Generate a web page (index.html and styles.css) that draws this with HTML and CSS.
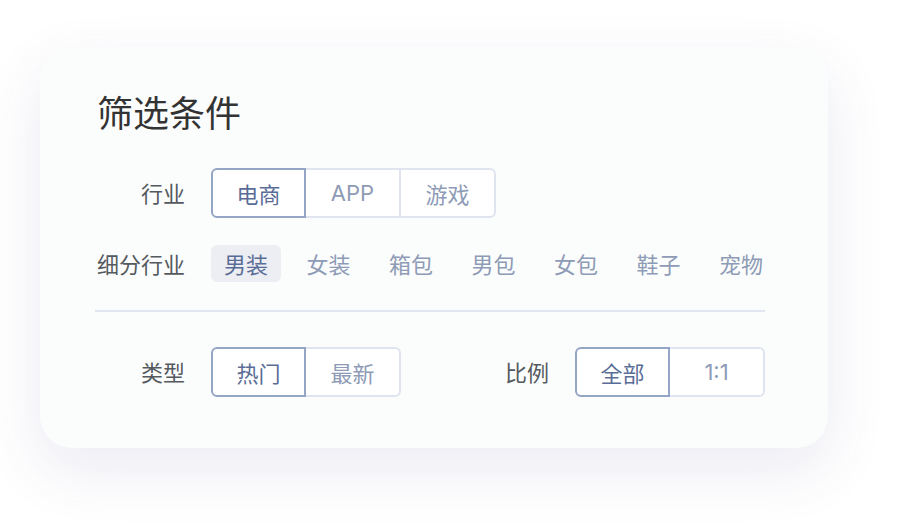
FILE: index.html
```html
<!DOCTYPE html>
<html lang="zh-CN">
  <head>
    <meta charset="UTF-8" />
    <meta name="viewport" content="width=device-width, initial-scale=1.0" />
    <title>筛选条件</title>
    <link rel="stylesheet" href="styles.css">
  </head>
  <body>
    <div class="card">
      <h1 class="title">筛选条件</h1>

      <div class="row">
        <span class="label">行业</span>
        <div class="seg">
          <span class="seg-item active">电商</span>
          <span class="seg-item">APP</span>
          <span class="seg-item">游戏</span>
        </div>
      </div>

      <div class="row sub">
        <span class="label">细分行业</span>
        <div class="chips">
          <span class="chip active">男装</span>
          <span class="chip">女装</span>
          <span class="chip">箱包</span>
          <span class="chip">男包</span>
          <span class="chip">女包</span>
          <span class="chip">鞋子</span>
          <span class="chip">宠物</span>
        </div>
      </div>

      <div class="divider"></div>

      <div class="row split">
        <div class="group">
          <span class="label">类型</span>
          <div class="seg">
            <span class="seg-item active">热门</span>
            <span class="seg-item">最新</span>
          </div>
        </div>
        <div class="group">
          <span class="label">比例</span>
          <div class="seg">
            <span class="seg-item active">全部</span>
            <span class="seg-item">1:1</span>
          </div>
        </div>
      </div>
    </div>
  </body>
</html>
```

FILE: styles.css
```css
*{
    padding: 0;
    margin: 0;
    box-sizing: border-box;
}
html, body{
    height: 100%;
}
body{
    background-color: #ffffff;
    font-family: "Inter", "Noto Sans CJK SC", sans-serif;
    padding: 47px 0 0 40px;
    overflow: hidden;
}
.card{
    width: 788px;
    height: 401px;
    background-color: #fbfdfc;
    border-radius: 32px;
    padding: 47px 63px 0 57px;
    box-shadow: 0 22px 60px rgba(70, 70, 150, 0.11);
}
.title{
    font-size: 36px;
    line-height: 40px;
    font-weight: 400;
    color: #333333;
    margin-bottom: 34px;
}
.row{
    display: flex;
    align-items: center;
}
.label{
    width: 88px;
    margin-right: 26px;
    padding-bottom: 2px;
    text-align: right;
    font-size: 22px;
    color: #555a60;
    white-space: nowrap;
}
.seg{
    display: flex;
}
.seg-item{
    width: 97px;
    height: 50px;
    margin-left: -2px;
    padding-bottom: 1px;
    display: flex;
    align-items: center;
    justify-content: center;
    border: 2px solid #dfe4ef;
    background-color: #ffffff;
    font-size: 22px;
    color: #8e9bb6;
}
.seg-item:first-child{
    width: 95px;
    margin-left: 0;
    border-radius: 6px 0 0 6px;
}
.seg-item:last-child{
    border-radius: 0 6px 6px 0;
}
.seg-item.active{
    position: relative;
    border-color: #95a5c5;
    color: #5a6d96;
}
.sub{
    margin-top: 27px;
}
.chips{
    flex: 1;
    display: flex;
    justify-content: space-between;
}
.chip{
    height: 37px;
    padding: 0 13px 2px;
    display: flex;
    align-items: center;
    border-radius: 6px;
    font-size: 22px;
    color: #8e9bb6;
}
.chip:last-child{
    padding-right: 2px;
}
.chip.active{
    background-color: #eceef3;
    color: #5a6d96;
}
.divider{
    height: 2px;
    margin: 28px 0 35px -2px;
    background-color: #e2e6f0;
}
.split{
    justify-content: space-between;
}
.group{
    display: flex;
    align-items: center;
}
```
